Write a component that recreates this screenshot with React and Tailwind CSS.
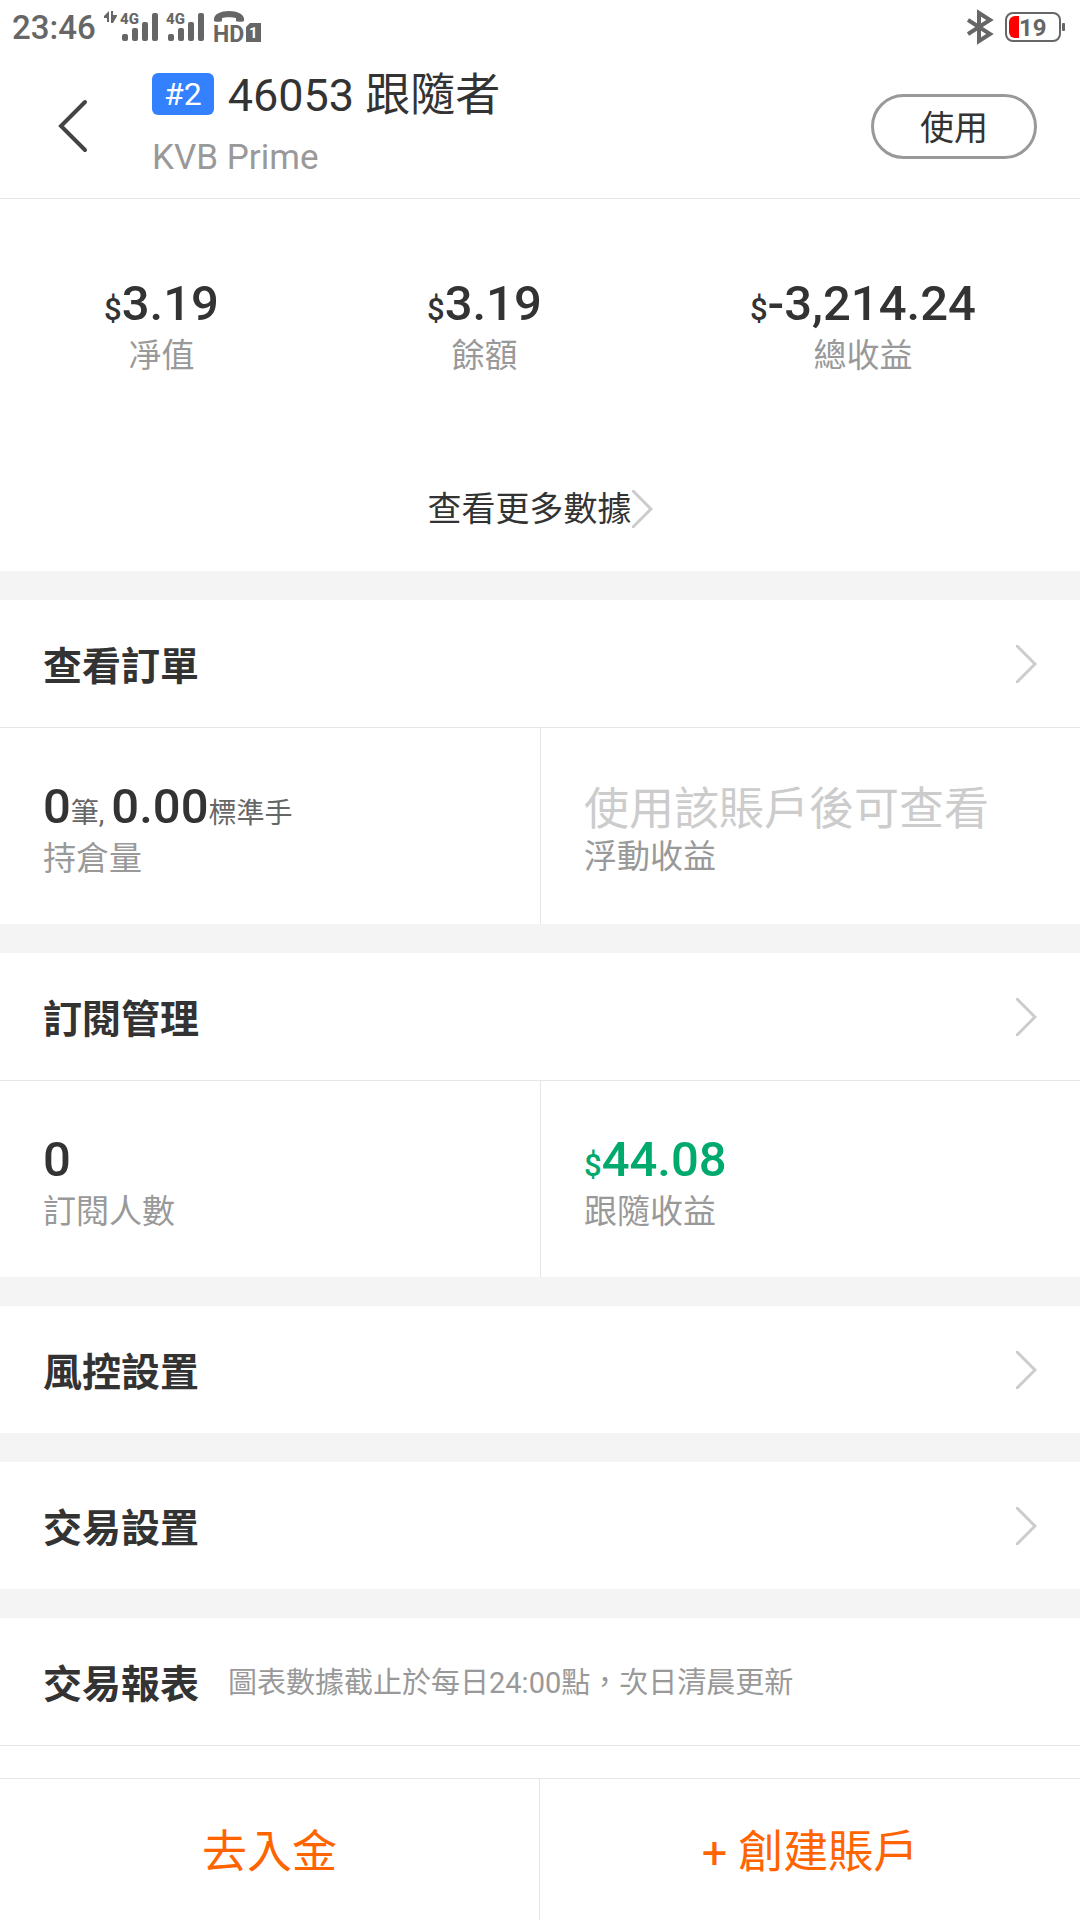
const stats = [
  { label: '凈值', value: '3.19' },
  { label: '餘額', value: '3.19' },
  { label: '總收益', value: '-3,214.24' },
];

function SignalBars({ x }) {
  return (
    <g>
      <text x={x - 2} y="24" fontSize="15" fontWeight="800">4G</text>
      <rect x={x} y="34" width="6" height="7" rx="2" />
      <rect x={x + 10} y="28" width="6" height="13" rx="2" />
      <rect x={x + 20} y="22" width="6" height="19" rx="2" />
      <rect x={x + 30} y="13" width="6" height="28" rx="2" />
    </g>
  );
}

function StatusBar() {
  return (
    <div className="flex h-[54px] items-center justify-between pl-3 pr-[14px] text-[#666]">
      <div className="flex items-center gap-2">
        <span className="pt-0.5 text-[33px] leading-[54px] font-medium">23:46</span>
        <svg width="160" height="54" viewBox="104 0 160 54" fill="currentColor" aria-hidden="true">
          <path d="M109 11v11h-2v-4h-4v-1zM111 11h2v4h4v1l-4 7h-2z" />
          <SignalBars x={122} />
          <SignalBars x={168} />
          <path d="M214 21v-2c0-5 7-8 15-8s15 3 15 8v2c0 1-8 1-8 0v-3c-3-1-11-1-14 0v3c0 1-8 1-8 0z" />
          <text x="213" y="42" fontSize="23" fontWeight="700">HD</text>
          <path d="M250 23h11v19h-15V27z" />
          <text x="249" y="38" fontSize="15" fontWeight="700" fill="#fff">1</text>
        </svg>
      </div>
      <svg width="99" height="54" viewBox="967 0 99 54" fill="none" aria-hidden="true">
        <path d="M968 20l22 14-11 7V13l11 7-22 14" stroke="#666" strokeWidth="4" />
        <rect x="1006" y="13" width="54" height="28" rx="7" stroke="#666" strokeWidth="2" />
        <path d="M1019 16v22h-4a6 6 0 0 1-6-6V22a6 6 0 0 1 6-6z" fill="#f00" />
        <rect x="1062" y="23" width="3" height="8" rx="1" fill="#666" />
        <text x="1019" y="36" fontSize="24" fontWeight="700" fill="#666">19</text>
      </svg>
    </div>
  );
}

function Chevron() {
  return (
    <svg width="21" height="38" viewBox="0 0 21 38" fill="none" stroke="#ccc" strokeWidth="3" className="shrink-0" aria-hidden="true">
      <path d="M0 0l19 19L0 38" />
    </svg>
  );
}

function Amount({ value, className = '' }) {
  return (
    <p className={`text-[49px] leading-[56px] font-medium ${className}`}>
      <span className="text-[31px] leading-none">$</span>
      {value}
    </p>
  );
}

function Unit({ children }) {
  return <span className="text-[28px] leading-none font-normal text-[#666]">{children}</span>;
}

function Label({ children }) {
  return <p className="text-[33px] leading-[48px] text-[#999]">{children}</p>;
}

function SectionTitle({ children }) {
  return <h2 className="font-['Noto_Sans_CJK_TC',sans-serif] text-[39px] font-bold">{children}</h2>;
}

function SectionLink({ title }) {
  return (
    <a href="#" className="flex h-[127px] items-center justify-between bg-white px-[43px]">
      <SectionTitle>{title}</SectionTitle>
      <Chevron />
    </a>
  );
}

function Pair({ children }) {
  return (
    <div className="grid grid-cols-2 border-t border-[#e5e5ea] bg-white *:border-[#e5e5ea] *:px-[43px] *:pt-[51px] *:pb-[41px] *:last:border-l">
      {children}
    </div>
  );
}

export default function App() {
  return (
    <div className="flex min-h-screen flex-col bg-[#f4f4f4] text-[#333] font-['Roboto','Noto_Sans_CJK_TC',sans-serif]" lang="zh-Hant">
      <header className="border-b border-[#e5e5ea] bg-white">
        <StatusBar />
        <div className="flex h-36 items-center pr-[43px]">
          <button type="button" aria-label="返回" className="flex w-[152px] shrink-0 pl-[58px]">
            <svg width="30" height="54" viewBox="0 0 30 54" fill="none" stroke="#444" strokeWidth="4" strokeLinecap="round" aria-hidden="true">
              <path d="M27 3L3 27l24 24" />
            </svg>
          </button>
          <div className="flex-1">
            <div className="flex h-16 items-center gap-[14px]">
              <span className="rounded-md bg-[#3381ff] px-3 text-[32px] leading-[42px] text-white">#2</span>
              <h1 className="pt-1 text-[45px] leading-[64px]">46053 跟隨者</h1>
            </div>
            <p className="text-[35px] leading-[64px] text-[#999]">KVB Prime</p>
          </div>
          <button type="button" className="h-[65px] w-[166px] rounded-full border-3 border-[#999] font-['Noto_Sans_CJK_TC',sans-serif] text-[34px] leading-[38px]">
            使用
          </button>
        </div>
      </header>

      <main className="flex flex-1 flex-col gap-[29px]">
        <section className="bg-white">
          <div className="flex justify-around pt-[77px] text-center">
            {stats.map((s) => (
              <div key={s.label}>
                <Amount value={s.value} />
                <Label>{s.label}</Label>
              </div>
            ))}
          </div>
          <a href="#" className="flex items-center justify-center pt-[110px] pb-[43px] text-[34px] leading-[38px]">
            查看更多數據
            <Chevron />
          </a>
        </section>

        <section>
          <SectionLink title="查看訂單" />
          <Pair>
            <div>
              <p className="text-[49px] leading-[56px] font-medium">
                0<Unit>筆, </Unit>0.00<Unit>標準手</Unit>
              </p>
              <Label>持倉量</Label>
            </div>
            <div>
              <p className="font-['Noto_Sans_CJK_TC',sans-serif] text-[45px] leading-[54px] text-[#ccc]">使用該賬戶後可查看</p>
              <Label>浮動收益</Label>
            </div>
          </Pair>
        </section>

        <section>
          <SectionLink title="訂閱管理" />
          <Pair>
            <div>
              <p className="text-[49px] leading-[56px] font-medium">0</p>
              <Label>訂閱人數</Label>
            </div>
            <div>
              <Amount value="44.08" className="text-[#00aa6d]" />
              <Label>跟隨收益</Label>
            </div>
          </Pair>
        </section>

        <SectionLink title="風控設置" />
        <SectionLink title="交易設置" />

        <section className="flex-1 bg-white">
          <div className="flex h-32 items-center gap-[29px] border-b border-[#e5e5ea] px-[43px]">
            <SectionTitle>交易報表</SectionTitle>
            <p className="pt-1 text-[29px] text-[#999]">圖表數據截止於每日24:00點，次日清晨更新</p>
          </div>
        </section>
      </main>

      <nav className="sticky bottom-0 grid h-[142px] grid-cols-2 divide-x divide-[#e5e5ea] border-t border-[#e5e5ea] bg-white text-[45px] text-[#ff6400] *:pt-1.5">
        <button type="button">去入金</button>
        <button type="button">+ 創建賬戶</button>
      </nav>
    </div>
  );
}
